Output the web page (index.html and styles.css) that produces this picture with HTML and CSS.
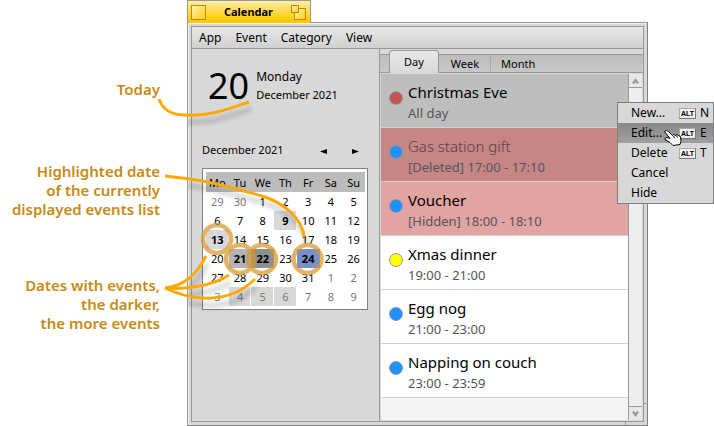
FILE: index.html
```html
<!DOCTYPE html>
<html lang="en">
<head>
<meta charset="utf-8">
<title>Calendar</title>
<link rel="stylesheet" href="styles.css">
</head>
<body>
<main class="page">
  <aside class="notes">
    <p class="note">Today</p>
    <p class="note">Highlighted date<br>of the currently<br>displayed events list</p>
    <p class="note">Dates with events,<br>the darker,<br>the more events</p>
  </aside>

  <section class="window">
    <header class="title-tab">
      <button class="tab-button" aria-label="Close"><svg width="15" height="15"><use href="#box"/></svg></button>
      <h1 class="title">Calendar</h1>
      <button class="tab-button" aria-label="Zoom">
        <svg width="16" height="15"><rect x="3.500" y="3.500" width="11" height="11" fill="url(#gold)" stroke="#bd8b00"/><rect x=".5" y=".5" width="7" height="7" fill="url(#gold)" stroke="#bd8b00"/></svg>
      </button>
    </header>
    <div class="frame">
      <div class="client">
        <nav class="menubar">
          <button class="menu-title">App</button>
          <button class="menu-title">Event</button>
          <button class="menu-title">Category</button>
          <button class="menu-title">View</button>
        </nav>
        <div class="panes">
          <div class="sidebar">
            <div class="today">
              <span class="today-number">20</span>
              <div class="today-text">
                <div class="weekday">Monday</div>
                <div class="today-month">December 2021</div>
              </div>
            </div>
            <div class="month-bar">
              <span class="month-name">December 2021</span>
              <button class="step" aria-label="Previous month"><svg width="7" height="5"><path d="M0 2.500 7 0v5z"/></svg></button>
              <button class="step" aria-label="Next month"><svg width="7" height="5"><path d="M7 2.500 0 0v5z"/></svg></button>
            </div>
            <div class="month-box">
              <table class="month">
                <thead><tr><th>Mo</th><th>Tu</th><th>We</th><th>Th</th><th>Fr</th><th>Sa</th><th>Su</th></tr></thead>
                <tbody>
                  <tr><td class="other">29</td><td class="other">30</td><td>1</td><td>2</td><td>3</td><td>4</td><td>5</td></tr>
                  <tr><td>6</td><td>7</td><td>8</td><td class="few bold">9</td><td>10</td><td>11</td><td>12</td></tr>
                  <tr><td class="few bold">13</td><td>14</td><td>15</td><td>16</td><td>17</td><td>18</td><td>19</td></tr>
                  <tr><td>20</td><td class="some bold">21</td><td class="many bold">22</td><td>23</td><td class="selected bold">24</td><td>25</td><td>26</td></tr>
                  <tr><td>27</td><td>28</td><td>29</td><td>30</td><td>31</td><td class="other">1</td><td class="other">2</td></tr>
                  <tr><td class="other">3</td><td class="few other">4</td><td class="few other">5</td><td class="few other">6</td><td class="other">7</td><td class="other">8</td><td class="other">9</td></tr>
                </tbody>
              </table>
            </div>
          </div>

          <div class="events">
            <div class="tabs">
              <button class="tab active">Day</button>
              <button class="tab">Week</button>
              <button class="tab">Month</button>
            </div>
            <div class="list-area">
              <ul class="list">
                <li class="event chosen"><i class="dot red"></i><div class="details"><div class="name">Christmas Eve</div><div class="time">All day</div></div></li>
                <li class="event deleted"><i class="dot"></i><div class="details"><div class="name">Gas station gift</div><div class="time">[Deleted] 17:00 - 17:10</div></div></li>
                <li class="event hidden"><i class="dot"></i><div class="details"><div class="name">Voucher</div><div class="time">[Hidden] 18:00 - 18:10</div></div></li>
                <li class="event"><i class="dot yellow"></i><div class="details"><div class="name">Xmas dinner</div><div class="time">19:00 - 21:00</div></div></li>
                <li class="event"><i class="dot"></i><div class="details"><div class="name">Egg nog</div><div class="time">21:00 - 23:00</div></div></li>
                <li class="event"><i class="dot"></i><div class="details"><div class="name">Napping on couch</div><div class="time">23:00 - 23:59</div></div></li>
              </ul>
              <div class="scrollbar">
                <button class="scroll-button" aria-label="Scroll up"><svg width="7" height="6"><path d="M0 5 3.500 0 7 5 5 6 3.500 4 2 6z"/></svg></button>
                <div class="track"></div>
                <button class="scroll-button last" aria-label="Scroll down"><svg width="7" height="6"><path d="M0 1 3.500 6 7 1 5 0 3.500 2 2 0z"/></svg></button>
              </div>
            </div>
          </div>
        </div>
      </div>
    </div>
    <svg class="corner" width="23" height="22"><path d="M.5 18v4M19 .5h4" stroke="#989898"/></svg>

    <div class="context">
      <button class="command"><span>New...</span><kbd class="alt">ALT</kbd><b class="key">N</b></button>
      <button class="command current"><span>Edit...</span><kbd class="alt">ALT</kbd><b class="key">E</b></button>
      <button class="command"><span>Delete</span><kbd class="alt">ALT</kbd><b class="key">T</b></button>
      <button class="command"><span>Cancel</span></button>
      <button class="command"><span>Hide</span></button>
    </div>
  </section>

  <svg class="overlay" width="714" height="426" viewBox="0 0 714 426">
    <defs>
      <linearGradient id="gold" x2="1" y2="1"><stop stop-color="#fff4bd"/><stop offset="1" stop-color="#ffcb08"/></linearGradient>
      <g id="box"><rect x=".5" y=".5" width="14" height="14" fill="url(#gold)" stroke="#bd8b00"/></g>
      <g id="lines" fill="none">
        <path d="M159 99C162 108 170 115 184 115C208 117 229 109 249 102"/>
        <path d="M165 176L190 179C212 182 241 190 262 196C284 203 302 218 304 237"/>
        <path d="M165 288C185 286 197 274 206 256"/>
        <path d="M165 288C188 290 214 285 229 275"/>
        <path d="M165 288C190 300 228 306 255 279"/>
      </g>
      <clipPath id="inside"><path d="M188 23H648V426H188z"/></clipPath>
      <filter id="soft"><feGaussianBlur stdDeviation="2"/></filter>
    </defs>
    <g clip-path="url(#inside)"><use href="#lines" y="7" x="2" stroke="#000" stroke-width="5" opacity=".15" filter="url(#soft)"/></g>
    <g fill="none" stroke="#d8982a" stroke-width="4.500" opacity=".72"><circle cx="217" cy="239" r="14"/><circle cx="240" cy="259" r="14"/><circle cx="262" cy="259" r="14"/><circle cx="307.500" cy="259" r="14"/></g>
    <use href="#lines" stroke="#ffa900" stroke-width="3"/>
    <path d="M664.500 131.500q2-2 4 0l4 4 1-1 2 1 1-1 2 1 2 1 .5 5-1 3-7 1-3-3-5-3q0-2 2-2l3 1z" fill="#fff" stroke="#000"/>
    <path d="M673.500 136l1 2M676.500 135.500l1 2" stroke="#000"/>
  </svg>
</main>
</body>
</html>
```
FILE: styles.css
```css
* { box-sizing: border-box; }
body { margin: 0; background: #fff; color: #000; font: 12px/16px "Noto Sans", sans-serif; }
button { margin: 0; padding: 0; border: 0; background: none; color: inherit; font: inherit; }
svg { display: block; }
.page { position: relative; display: flex; min-height: 100vh; }
.overlay { position: absolute; left: 0; top: 0; pointer-events: none; }

.notes { flex: none; width: 187px; padding: 80px 27px 0 0; text-align: right; }
.note { margin: 0 0 57px; color: #c88a14; font-size: 15px; font-weight: 600; line-height: 19px; white-space: nowrap; }
.note:first-child { margin-bottom: 63px; }

.window { position: relative; flex: 1; display: flex; flex-direction: column; margin-right: 66px; }
.title-tab { position: relative; z-index: 1; display: flex; align-items: center; justify-content: space-between; align-self: flex-start; width: 124px; height: 23px; margin-bottom: -1px; padding: 0 3px; border: 1px solid #989898; border-bottom: 0; background: linear-gradient(#ffedaa, #ffcb00 85%); }
.title { margin: 0; font-size: 11px; line-height: 16px; }

.frame { flex: 1; display: flex; padding: 3px; border: 1px solid #989898; border-right-color: #808080; border-bottom-color: #808080; background: #d8d8d8; box-shadow: inset 1px 1px #f0f0f0; }
.client { flex: 1; display: flex; flex-direction: column; border: 1px solid #989898; background: #d8d8d8; }
.menubar { display: flex; height: 22px; padding: 0; border-bottom: 1px solid #989898; background: linear-gradient(#e8e8e8, #d0d0d0); }
.menu-title { padding: 0 7px; }
.panes { flex: 1; display: flex; }

.sidebar { flex: none; width: 187px; padding: 16px 11px 0 10px; }
.today { display: flex; align-items: center; height: 42px; padding-left: 6px; gap: 7px; }
.today-number { font-size: 36px; line-height: 42px; }
.weekday { font-size: 12px; line-height: 18px; }
.today-month { font-size: 11px; line-height: 18px; }
.month-bar { display: flex; align-items: center; height: 20px; margin: 33px 0 8px; padding-right: 9px; gap: 25px; }
.month-name { flex: 1; font-size: 11px; white-space: nowrap; }
.step { padding-top: 3px; }
.month-box { padding: 3px 2px 3px 3px; border: 1px solid #808080; background: #fff; }
.month { width: 100%; table-layout: fixed; border-collapse: collapse; font-size: 11px; line-height: 19px; text-align: center; }
.month th, .month td { height: 19px; padding: 0; font-weight: 400; }
.month th { background: #bcbcbc; height: 20px; }
.month .other { color: #777; }
.month .few { background: #d8d8d8; box-shadow: inset -1px 0 #fff; }
.month .some { background: #b4b4b4; }
.month .many { background: #909090; }
.month .selected { background: #7a8fcb; }
.month .bold { font-weight: 700; }

.events { flex: 1; display: flex; flex-direction: column; border-left: 1px solid #989898; }
.tabs { display: flex; align-items: flex-end; height: 24px; padding-left: 9px; border-bottom: 1px solid #989898; background: linear-gradient(#d8d8d8 5px, #989898 5px 6px, #bcbcbc 6px, #c8c8c8); font-size: 11px; }
.tab { height: 17px; padding: 0 11px 0 12px; line-height: 15px; border-right: 1px solid #aaa; }
.tab:last-child { border-right: 0; padding-left: 10px; }
.tab.active { height: 23px; margin-bottom: -1px; padding: 0 14px; border: 1px solid #989898; border-bottom: 0; border-radius: 4px 4px 0 0; background: linear-gradient(#e8e8e8, #d8d8d8); line-height: 20px; }
.list-area { flex: 1; display: flex; border: 1px solid #d8d8d8; }
.list { flex: 1; margin: 0; padding: 0; list-style: none; background: #f4f4f4; }
.event { display: flex; align-items: center; gap: 5px; height: 54px; padding: 0 8px; border-bottom: 1px solid #d0d0d0; background: #fff; }
.dot { flex: none; width: 14px; height: 14px; margin-top: -5px; border: 1px solid #999; border-radius: 50%; background: #1e90ff; }
.red { background: #c35557; }
.yellow { background: #ff0; }
.details { padding-top: 3px; }
.name { font-size: 15px; line-height: 22px; }
.time { color: #555; font-size: 13px; line-height: 20px; }
.chosen { background: #bebebe; }
.deleted { background: #c68686; }
.deleted .name { color: #5c3e3e; font-weight: 300; }
.hidden { background: #e2a3a3; }
.scrollbar { flex: none; display: flex; flex-direction: column; width: 14px; border-left: 1px solid #989898; }
.track { flex: 1; background: #eee; }
.scroll-button { display: grid; place-items: center; height: 14px; background: #e8e8e8; border-bottom: 1px solid #989898; fill: #989898; }
.scroll-button.last { border-top: 1px solid #989898; border-bottom: 0; }
.corner { position: absolute; right: 0; bottom: 1px; }

.context { position: absolute; left: 430px; top: 102px; width: 97px; border: 1px solid #808080; background: #d8d8d8; }
.command { display: flex; align-items: center; width: 100%; height: 20px; padding: 0 4px 0 13px; text-align: left; }
.command.current { background: linear-gradient(#888, #a0a0a0); }
.alt { width: 17px; height: 11px; margin-left: auto; border: 1px solid #aaa; border-right-color: #777; border-bottom-color: #777; background: #eee; font: 700 7px/9px "Liberation Sans", sans-serif; text-align: center; }
.key { width: 13px; padding-left: 4px; font-weight: 400; }
```
